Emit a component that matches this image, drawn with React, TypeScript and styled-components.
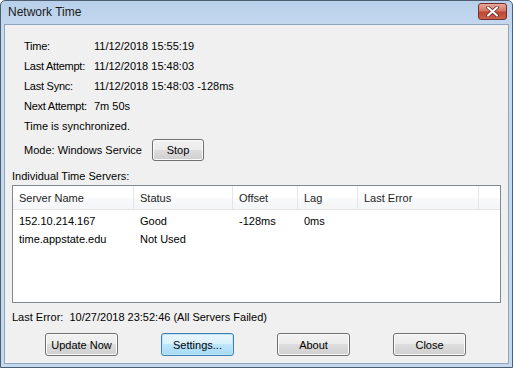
import styled, { createGlobalStyle } from 'styled-components';

const Global = createGlobalStyle`
  html, body {
    margin: 0;
    padding: 0;
    background: #ffffff;
  }
  body {
    font-family: "Liberation Sans", Arial, sans-serif;
    font-size: 11px;
    color: #000;
  }
`;

const Window = styled.div`
  box-sizing: border-box;
  width: 513px;
  height: 368px;
  display: flex;
  flex-direction: column;
  border: 1px solid #4d5d72;
  border-radius: 5px 5px 0 0;
  background: linear-gradient(#b9d0ea, #c6daf0 30px, #c4d8ee);
  overflow: hidden;
`;

const TitleBar = styled.div`
  height: 23px;
  display: flex;
  align-items: center;
  justify-content: space-between;
  padding: 0 5px 0 7px;
`;

const Title = styled.span`
  font-size: 12px;
  color: #1a1a1a;
  margin-top: -1px;
`;

const CloseBox = styled.div`
  box-sizing: border-box;
  width: 29px;
  height: 17px;
  margin-top: -3px;
  border: 1px solid #6e3030;
  border-radius: 3px;
  background: linear-gradient(#e9a99a, #d47664 45%, #c0472f 55%, #c9614c);
  display: flex;
  align-items: center;
  justify-content: center;
`;

const Client = styled.div`
  flex: 1;
  margin: 0 3px 3px 3px;
  border: 1px solid #8ea4bf;
  background: #f0f0f0;
  padding: 11px 7px 0 7px;
  display: flex;
  flex-direction: column;
`;

const Info = styled.div`
  padding-left: 12px;
  display: grid;
  grid-template-columns: 70px auto;
  grid-auto-rows: 20px;
  align-items: center;
`;

const Label = styled.div`
  letter-spacing: -0.25px;
`;

const Full = styled.div`
  grid-column: 1 / 3;
`;

const ModeRow = styled.div`
  display: flex;
  align-items: center;
  padding-left: 12px;
  margin-top: 3px;
  height: 22px;
`;

const ModeText = styled.span`
  width: 128px;
`;

const Button = styled.button<{ $default?: boolean; $w?: number; $h?: number }>`
  box-sizing: border-box;
  width: ${({ $w }) => $w ?? 73}px;
  height: ${({ $h }) => $h ?? 23}px;
  padding: 0;
  font-family: "Liberation Sans", Arial, sans-serif;
  font-size: 11px;
  color: #000;
  border-radius: 3px;
  border: 1px solid ${({ $default }) => ($default ? '#3c7fb1' : '#707070')};
  background: ${({ $default }) =>
    $default
      ? 'linear-gradient(#eaf6fd, #d9f0fc 50%, #bee6fd 50%, #a7d9f5)'
      : 'linear-gradient(#f2f2f2, #ebebeb 50%, #dddddd 50%, #cfcfcf)'};
  box-shadow: inset 0 0 0 1px ${({ $default }) => ($default ? '#bfe4f8' : '#fcfcfc')};
`;

const SectionLabel = styled.div`
  height: 18px;
  display: flex;
  align-items: center;
  margin-top: 6px;
`;

const ListBox = styled.div`
  height: 118px;
  box-sizing: border-box;
  border: 1px solid #828790;
  background: #fff;
`;

const cols = '121px 99px 65px 60px 121px 1fr';

const HeaderRow = styled.div`
  display: grid;
  grid-template-columns: ${cols};
  height: 23px;
  border-bottom: 1px solid #e5e5e5;
  background: linear-gradient(#ffffff, #ffffff 50%, #f9fafb 50%, #f4f5f7);
`;

const HeaderCell = styled.div`
  display: flex;
  align-items: center;
  padding-left: 6px;
  border-right: 1px solid #e5e5e5;
  color: #1e1e1e;
  &:last-child {
    border-right: none;
  }
`;

const Rows = styled.div`
  padding-top: 2px;
`;

const DataRow = styled.div`
  display: grid;
  grid-template-columns: ${cols};
  height: 18px;
  align-items: center;
`;

const Cell = styled.div`
  padding-left: 6px;
  white-space: nowrap;
`;

const ErrorLine = styled.div`
  height: 18px;
  display: flex;
  align-items: center;
  margin-top: 5px;
`;

const ButtonBar = styled.div`
  display: flex;
  gap: 43px;
  padding-left: 33px;
  margin-top: 7px;
`;

const CloseGlyph = () => (
  <svg width="13" height="11" viewBox="0 0 13 11">
    <path d="M2 1.5 L11 9.5 M11 1.5 L2 9.5" stroke="#5a2020" strokeWidth="3.6" strokeLinecap="round" />
    <path d="M2 1.5 L11 9.5 M11 1.5 L2 9.5" stroke="#ffffff" strokeWidth="2.2" strokeLinecap="round" />
  </svg>
);

const info: [string, string][] = [
  ['Time:', '11/12/2018 15:55:19'],
  ['Last Attempt:', '11/12/2018 15:48:03'],
  ['Last Sync:', '11/12/2018 15:48:03 -128ms'],
  ['Next Attempt:', '7m 50s'],
];

const servers = [
  ['152.10.214.167', 'Good', '-128ms', '0ms', ''],
  ['time.appstate.edu', 'Not Used', '', '', ''],
];

export default function App() {
  return (
    <>
      <Global />
      <Window>
        <TitleBar>
          <Title>Network Time</Title>
          <CloseBox>
            <CloseGlyph />
          </CloseBox>
        </TitleBar>
        <Client>
          <Info>
            {info.flatMap(([k, v]) => [
              <Label key={k}>{k}</Label>,
              <div key={k + 'v'}>{v}</div>,
            ])}
            <Full>Time is synchronized.</Full>
          </Info>
          <ModeRow>
            <ModeText>Mode: Windows Service</ModeText>
            <Button $w={52} $h={22}>Stop</Button>
          </ModeRow>
          <SectionLabel>Individual Time Servers:</SectionLabel>
          <ListBox>
            <HeaderRow>
              {['Server Name', 'Status', 'Offset', 'Lag', 'Last Error', ''].map((h, i) => (
                <HeaderCell key={i}>{h}</HeaderCell>
              ))}
            </HeaderRow>
            <Rows>
              {servers.map((r) => (
                <DataRow key={r[0]}>
                  {r.map((c, i) => (
                    <Cell key={i}>{c}</Cell>
                  ))}
                </DataRow>
              ))}
            </Rows>
          </ListBox>
          <ErrorLine>Last Error:&nbsp; 10/27/2018 23:52:46 (All Servers Failed)</ErrorLine>
          <ButtonBar>
            <Button>Update Now</Button>
            <Button $default>Settings...</Button>
            <Button>About</Button>
            <Button>Close</Button>
          </ButtonBar>
        </Client>
      </Window>
    </>
  );
}
